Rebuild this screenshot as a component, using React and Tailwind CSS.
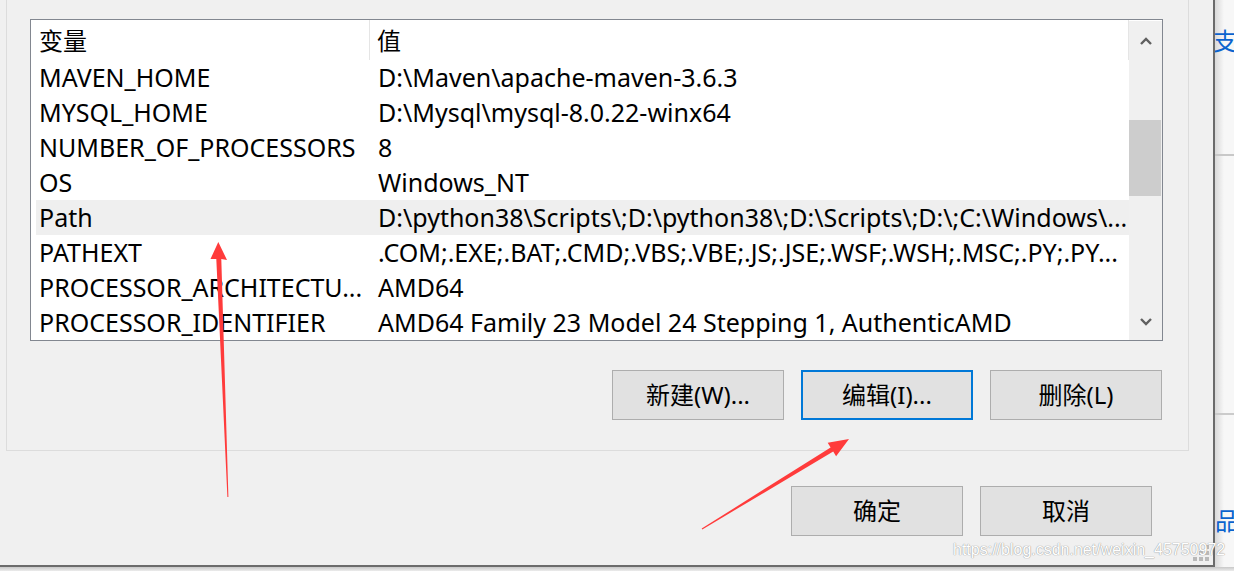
const rows = [
  ["MAVEN_HOME", "D:\\Maven\\apache-maven-3.6.3"],
  ["MYSQL_HOME", "D:\\Mysql\\mysql-8.0.22-winx64"],
  ["NUMBER_OF_PROCESSORS", "8"],
  ["OS", "Windows_NT"],
  ["Path", "D:\\python38\\Scripts\\;D:\\python38\\;D:\\Scripts\\;D:\\;C:\\Windows\\..."],
  ["PATHEXT", ".COM;.EXE;.BAT;.CMD;.VBS;.VBE;.JS;.JSE;.WSF;.WSH;.MSC;.PY;.PY..."],
  ["PROCESSOR_ARCHITECTU...", "AMD64"],
  ["PROCESSOR_IDENTIFIER", "AMD64 Family 23 Model 24 Stepping 1, AuthenticAMD"],
];

function Chevron({ down }) {
  return (
    <svg width="12" height="9" viewBox="0 0 12 9">
      <polyline
        points={down ? "1,2 6,7 11,2" : "1,7 6,2 11,7"}
        fill="none"
        stroke="#606060"
        strokeWidth="2.4"
      />
    </svg>
  );
}

function Btn({ children, focus }) {
  return (
    <div
      className={
        "w-[172px] h-[50px] flex items-center justify-center text-[24px] text-black bg-[#e1e1e1] " +
        (focus ? "border-2 border-[#0078d7]" : "border border-[#adadad]")
      }
    >
      {children}
    </div>
  );
}

export default function App() {
  return (
    <div className="relative w-[1234px] h-[571px] overflow-hidden bg-[#dcdcdc] font-['Noto_Sans','Noto_Sans_CJK_SC',sans-serif] text-black">
      <div className="flex h-[567px]">
        {/* dialog window */}
        <div className="w-[1215px] h-[567px] shrink-0 bg-[#f0f0f0] border-r-2 border-b-2 border-[#6b6b6b] flex flex-col pl-[6px]">
          {/* group box */}
          <div className="w-[1183px] h-[451px] border-l border-r border-b border-[#dcdcdc] flex flex-col pl-[23px] pt-[19px]">
            {/* list */}
            <div className="w-[1133px] h-[322px] border border-[#828790] bg-white flex">
              <div className="flex-1 flex flex-col overflow-hidden">
                <div className="h-[40px] flex">
                  <div className="w-[339px] h-full pl-[8px] flex items-center border-r border-[#e5e5e5] text-[24px] pt-[2px]">
                    变量
                  </div>
                  <div className="flex-1 h-full pl-[7px] flex items-center border-r border-[#e5e5e5] text-[24px] pt-[2px]">
                    值
                  </div>
                </div>
                {rows.map(([k, v]) => (
                  <div
                    key={k}
                    className={
                      "h-[35px] ml-[5px] flex items-center text-[25px] whitespace-nowrap " +
                      (k === "Path" ? "bg-[#efefef]" : "")
                    }
                  >
                    <div className="w-[339px] shrink-0 pl-[3px] overflow-hidden">{k}</div>
                    <div className="flex-1 pl-[3px] overflow-hidden">{v}</div>
                  </div>
                ))}
              </div>
              {/* scrollbar */}
              <div className="w-[33px] mt-[1px] bg-[#f0f0f0] flex flex-col">
                <div className="h-[40px] flex items-center justify-center">
                  <Chevron />
                </div>
                <div className="h-[59px]" />
                <div className="h-[76px] mr-[1px] bg-[#cdcdcd]" />
                <div className="flex-1" />
                <div className="h-[36px] flex items-start justify-center pt-[13px]">
                  <Chevron down />
                </div>
              </div>
            </div>
            {/* buttons */}
            <div className="mt-[29px] flex justify-end gap-[17px] pr-[26px]">
              <Btn>新建(W)...</Btn>
              <Btn focus>编辑(I)...</Btn>
              <Btn>删除(L)</Btn>
            </div>
          </div>
          <div className="mt-[35px] flex justify-end gap-[17px] pr-[61px]">
            <Btn>确定</Btn>
            <Btn>取消</Btn>
          </div>
        </div>
        {/* background page to the right */}
        <div className="flex-1 h-[567px] overflow-hidden flex flex-col bg-[linear-gradient(to_right,#d9d9d9,#f7f7f7_9px)]">
          <div className="mt-[28px] h-[26px] leading-[26px] text-[24px] text-[#0b63ce] ml-[-2px] whitespace-nowrap">支</div>
          <div className="mt-[100px] h-[2px] bg-[#c8c8c8]" />
          <div className="mt-[257px] h-[2px] bg-[#cbcbcb]" />
          <div className="mt-[93px] h-[26px] leading-[26px] text-[24px] text-[#0b63ce] whitespace-nowrap">品</div>
        </div>
      </div>
      <div className="h-[4px] bg-[linear-gradient(to_bottom,#c8c8c8,#ececec)]" />

      {/* resize grip */}
      <svg className="absolute left-[1193px] top-[545px]" width="18" height="17" viewBox="0 0 18 17">
        <g fill="#b9b9b9">
          <rect x="12" y="0" width="4" height="4" />
          <rect x="6" y="6" width="4" height="4" />
          <rect x="12" y="6" width="4" height="4" />
          <rect x="0" y="12" width="4" height="4" />
          <rect x="6" y="12" width="4" height="4" />
          <rect x="12" y="12" width="4" height="4" />
        </g>
      </svg>

      {/* watermark */}
      <div className="absolute left-[953px] top-[540px] text-[16px] leading-[20px] font-['Liberation_Sans',sans-serif] text-white [text-shadow:0_0_1px_#9a9a9a,0_0_1px_#9a9a9a]">
        https://blog.csdn.net/weixin_45750972
      </div>

      {/* red annotation arrows */}
      <svg className="absolute left-0 top-0 pointer-events-none" width="1234" height="571" viewBox="0 0 1234 571">
        <polygon
          fill="#ff3b3b"
          points="228.4,497 221.3,259 227,260 218.3,242 210.5,259 216.3,259 227.4,497"
        />
        <polygon
          fill="#ff3b3b"
          points="702.3,529.4 833.2,451.6 836.1,456.3 849,439 827.7,442.7 830.6,447.4 701.7,528.6"
        />
      </svg>
    </div>
  );
}
